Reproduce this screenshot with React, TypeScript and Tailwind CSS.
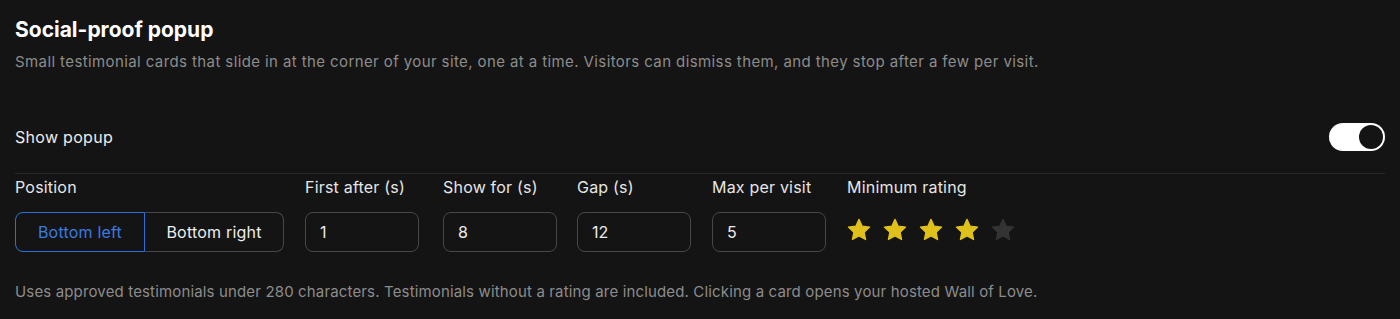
import React, { useState } from "react";

const Star: React.FC<{ filled: boolean }> = ({ filled }) => (
  <svg viewBox="0 0 24 24" className="h-[26px] w-[26px]" aria-hidden>
    <path
      d="M12 2.2l2.95 6.3 6.85.8-5.07 4.7 1.36 6.8L12 17.4l-6.09 3.4 1.36-6.8L2.2 9.3l6.85-.8z"
      fill={filled ? "#e0c11b" : "#333333"}
      strokeLinejoin="round"
      stroke={filled ? "#e0c11b" : "#333333"}
      strokeWidth="1.2"
    />
  </svg>
);

const NumberField: React.FC<{ label: string; value: string }> = ({ label, value }) => (
  <div className="flex flex-col">
    <span className="text-[16px] leading-6 tracking-[0.2px] text-[#e6e6e6]">{label}</span>
    <div className="mt-[13px] flex h-10 w-[114px] items-center rounded-lg border border-[#474747] px-[14px] text-[16px] text-[#ececec]">
      {value}
    </div>
  </div>
);

export default function App() {
  const [position, setPosition] = useState<"left" | "right">("left");
  const rating = 4;

  return (
    <div className="min-h-[319px] bg-[#141414] px-[15px] pt-4 font-['Inter',sans-serif]">
      {/* Header */}
      <h1 className="text-[21px] font-bold leading-7 text-white">Social-proof popup</h1>
      <p className="mt-2 text-[15px] leading-5 tracking-[0.4px] text-[#8c8c8c]">
        Small testimonial cards that slide in at the corner of your site, one at a time. Visitors can dismiss them, and
        they stop after a few per visit.
      </p>

      {/* Toggle row */}
      <div className="mt-[51px] flex items-center justify-between border-b border-[#282828] pb-[22px]">
        <span className="text-[16px] tracking-[0.3px] text-[#ececec]">Show popup</span>
        <button className="flex h-7 w-14 items-center justify-end rounded-full bg-white pr-[2px]">
          <span className="h-6 w-6 rounded-full bg-[#141414]" />
        </button>
      </div>

      {/* Settings */}
      <div className="mt-px flex gap-5">
        <div className="flex flex-col">
          <span className="text-[16px] leading-6 tracking-[0.2px] text-[#e6e6e6]">Position</span>
          <div className="mt-[13px] flex h-10">
            <button
              onClick={() => setPosition("left")}
              className={
                position === "left"
                  ? "w-[130px] rounded-l-lg border border-[#2e6fd8] text-[16px] tracking-[0.2px] text-[#3a7be0]"
                  : "w-[130px] rounded-l-lg border border-[#474747] text-[16px] tracking-[0.2px] text-[#ececec]"
              }
            >
              Bottom left
            </button>
            <button
              onClick={() => setPosition("right")}
              className={
                position === "right"
                  ? "w-[139px] rounded-r-lg border border-[#2e6fd8] text-[16px] tracking-[0.2px] text-[#3a7be0]"
                  : "w-[139px] rounded-r-lg border border-l-0 border-[#474747] text-[16px] tracking-[0.2px] text-[#ececec]"
              }
            >
              Bottom right
            </button>
          </div>
        </div>
        <div className="ml-px">
          <NumberField label="First after (s)" value="1" />
        </div>
        <div className="ml-[4px]">
          <NumberField label="Show for (s)" value="8" />
        </div>
        <NumberField label="Gap (s)" value="12" />
        <div className="ml-px">
          <NumberField label="Max per visit" value="5" />
        </div>
        <div className="ml-px flex flex-col">
          <span className="text-[16px] leading-6 tracking-[0.2px] text-[#e6e6e6]">Minimum rating</span>
          <div className="mt-[13px] -ml-px flex h-10 items-center gap-[10px] pb-[5px]">
            {[1, 2, 3, 4, 5].map((n) => (
              <Star key={n} filled={n <= rating} />
            ))}
          </div>
        </div>
      </div>

      {/* Footer note */}
      <p className="mt-[30px] text-[15px] leading-5 tracking-[0.15px] text-[#8c8c8c]">
        Uses approved testimonials under 280 characters. Testimonials without a rating are included. Clicking a card
        opens your hosted Wall of Love.
      </p>
    </div>
  );
}
